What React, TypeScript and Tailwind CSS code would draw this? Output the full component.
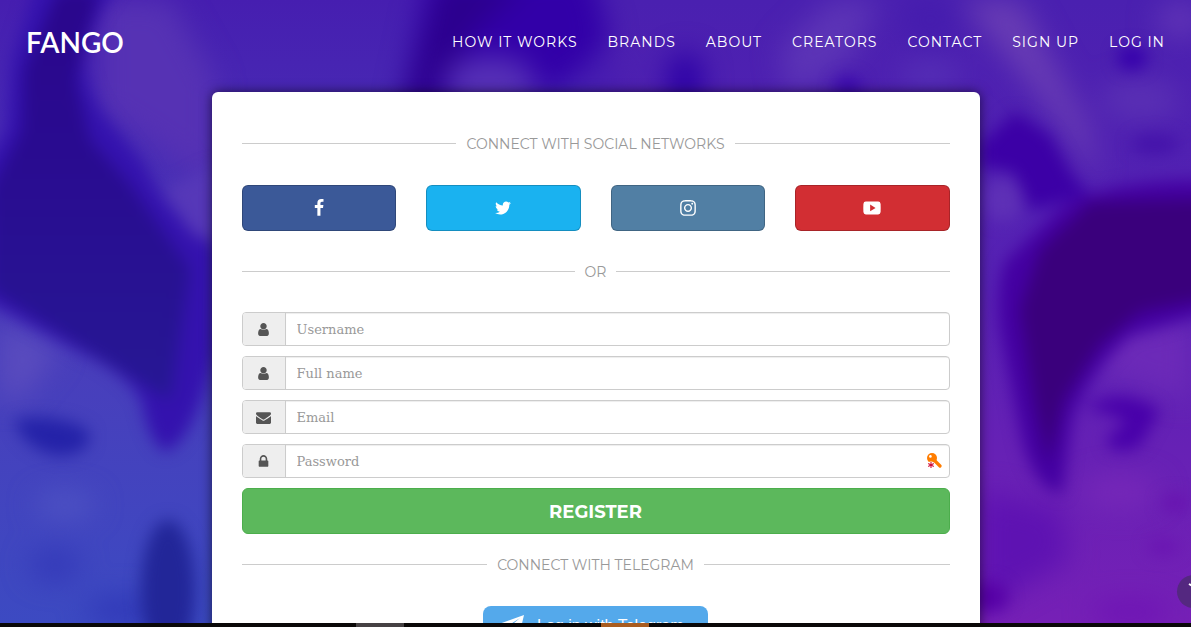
import type { ReactNode } from 'react'
import { FaInstagram } from 'react-icons/fa'

const NAV_LINKS = ['How it works', 'Brands', 'About', 'Creators', 'Contact', 'Sign up', 'Log in']

const ICONS = {
  user: 'M1536 1399q0 109-62.5 187t-150.5 78h-854q-88 0-150.5-78t-62.5-187q0-85 8.5-160.5t31.5-152 58.5-131 94-89 134.5-34.5q131 128 313 128t313-128q76 0 134.5 34.5t94 89 58.5 131 31.5 152 8.5 160.5zm-256-887q0 159-112.5 271.5t-271.5 112.5-271.5-112.5-112.5-271.5 112.5-271.5 271.5-112.5 271.5 112.5 112.5 271.5z',
  envelope:
    'M1792 710v794q0 66-47 113t-113 47h-1472q-66 0-113-47t-47-113v-794q44 49 101 87 362 246 497 345 57 42 92.5 65.5t94.5 48 110 24.5h2q51 0 110-24.5t94.5-48 92.5-65.5q170-123 498-345 57-39 100-87zm0-294q0 79-49 151t-122 123q-376 261-468 325-10 7-42.5 31t-54 38.5-52 32.5-57.5 27-50 9h-2q-23 0-50-9t-57.5-27-52-32.5-54-38.5-42.5-31q-91-64-262-182.5t-205-142.5q-62-42-117-115.5t-55-136.5q0-78 41.5-130t118.5-52h1472q65 0 112.5 47t47.5 113z',
  lock: 'M640 768h512v-192q0-106-75-181t-181-75-181 75-75 181v192zm832 96v576q0 40-28 68t-68 28h-960q-40 0-68-28t-28-68v-576q0-40 28-68t68-28h32v-192q0-184 132-316t316-132 316 132 132 316v192h32q40 0 68 28t28 68z',
  facebook:
    'M1343 12v264h-157q-86 0-116 36t-30 108v189h293l-39 296h-254v759h-306v-759h-255v-296h255v-218q0-186 104-288.5t277-102.5q147 0 228 12z',
  twitter:
    'M1684 408q-67 98-162 167 1 14 1 42 0 130-38 259.5t-115.5 248.5-184.5 210.5-258 146-323 54.5q-271 0-496-145 35 4 78 4 225 0 401-138-105-2-188-64.5t-114-159.5q33 5 61 5 43 0 85-11-112-23-185.5-111.5t-73.5-205.5v-4q68 38 146 41-66-44-105-115t-39-154q0-88 44-163 121 149 294.5 238.5t371.5 99.5q-8-38-8-74 0-134 94.5-228.5t228.5-94.5q140 0 236 102 109-21 205-78-37 115-142 178 93-10 186-50z',
  youtube:
    'M280 256h1232q220 0 240 240 20 400 0 800-20 240-240 240h-1232q-220 0-240-240-20-400 0-800 20-240 240-240zm431 290v680l540-340z',
}

function Icon({ name, className }: { name: keyof typeof ICONS; className: string }) {
  return (
    <svg viewBox="0 0 1792 1792" className={className} fill="currentColor" fillRule="evenodd" aria-hidden="true">
      <path d={ICONS[name]} />
    </svg>
  )
}

function Backdrop() {
  return (
    <svg
      className="absolute inset-0 h-full w-full"
      viewBox="0 0 1191 623"
      preserveAspectRatio="xMidYMid slice"
      aria-hidden="true"
    >
      <defs>
        <linearGradient id="left" x1="0" y1="0" x2="0" y2="1">
          <stop offset="0" stopColor="#461eb0" />
          <stop offset="0.5" stopColor="#4b3cba" />
          <stop offset="1" stopColor="#3c4ac2" />
        </linearGradient>
        <linearGradient id="right" x1="0" y1="0" x2="0" y2="1">
          <stop offset="0" stopColor="#4a20b0" />
          <stop offset="0.45" stopColor="#5722b4" />
          <stop offset="1" stopColor="#7620b6" />
        </linearGradient>
        <linearGradient id="hair" x1="0" y1="0" x2="0" y2="1">
          <stop offset="0" stopColor="#2a068c" />
          <stop offset="0.4" stopColor="#290b90" />
          <stop offset="1" stopColor="#261894" />
        </linearGradient>
        <filter id="soft" x="-30%" y="-30%" width="160%" height="160%" colorInterpolationFilters="sRGB">
          <feGaussianBlur stdDeviation="8" />
        </filter>
        <filter id="softer" x="-50%" y="-50%" width="200%" height="200%" colorInterpolationFilters="sRGB">
          <feGaussianBlur stdDeviation="14" />
        </filter>
      </defs>
      <rect width="600" height="623" fill="url(#left)" />
      <rect x="600" width="591" height="623" fill="url(#right)" />

      {/* left face */}
      <g filter="url(#softer)">
        <path d="M100 0 L170 0 L215 80 L215 190 L150 140 L100 110 Z" fill="#5632b4" />
        <path d="M0 320 L60 350 L20 400 L0 400 Z" fill="#5a4cbe" />
        <ellipse cx="65" cy="505" rx="30" ry="12" fill="#5054c4" />
        <ellipse cx="55" cy="565" rx="25" ry="15" fill="#3338b8" />
        <ellipse cx="125" cy="610" rx="40" ry="14" fill="#3038b8" />
      </g>
      <g filter="url(#soft)">
        <path
          d="M38 -20 L122 -20 Q88 20 84 65 Q92 105 115 128 L145 165 Q165 215 215 245 L215 350 Q195 440 165 452 Q148 440 142 402 Q130 375 80 352 L-20 298 L-20 170 L6 130 L12 60 Z"
          fill="#3412ae"
        />
        <path d="M58 -10 L100 -10 L76 80 L90 140 L130 185 L190 270 L170 400 L110 365 L-10 290 L-10 190 L22 130 L24 70 Z" fill="url(#hair)" />
        <path d="M165 190 L215 165 L215 245 L190 232 Z" fill="#5638b8" />
        <path d="M14 420 Q55 412 88 430 Q96 452 60 456 Q24 450 14 420 Z" fill="#2422a8" />
        <ellipse cx="168" cy="590" rx="27" ry="70" fill="#222698" />
      </g>

      {/* middle face */}
      <g filter="url(#softer)">
        <path d="M430 -30 L590 -30 L610 40 L560 90 L400 110 Z" fill="#3200a8" />
        <path d="M440 -20 L530 -20 L475 30 L430 110 L400 110 Z" fill="#2c008e" />
        <ellipse cx="490" cy="82" rx="46" ry="26" fill="#5630b6" />
        <ellipse cx="685" cy="80" rx="18" ry="28" fill="#2c00a6" />
        <ellipse cx="600" cy="80" rx="20" ry="20" fill="#471cb0" />
      </g>

      {/* right face */}
      <g filter="url(#softer)">
        <path d="M780 50 L830 0 L880 0 L850 60 L790 100 Z" fill="#5c34b6" />
        <ellipse cx="930" cy="20" rx="28" ry="24" fill="#451cae" />
        <ellipse cx="930" cy="75" rx="30" ry="14" fill="#5630b6" />
        <path d="M960 0 L1020 0 L1090 130 L1100 180 L1050 110 Z" fill="#683cb4" />
        <ellipse cx="1180" cy="20" rx="24" ry="18" fill="#6034b6" />
        <ellipse cx="1140" cy="100" rx="40" ry="20" fill="#5a30b4" />
        <path d="M1100 330 L1191 320 L1191 400 L1090 370 Z" fill="#6c2ab8" />
        <ellipse cx="1120" cy="492" rx="40" ry="16" fill="#7628b8" />
        <path d="M980 490 L1060 510 L1070 560 L980 610 Z" fill="#5e12b2" />
        <ellipse cx="1130" cy="612" rx="40" ry="10" fill="#6c10b4" />
      </g>
      <g filter="url(#soft)">
        <path d="M980 145 L1015 112 L1050 135 L1072 175 L1090 195 L1030 210 L1014 172 L980 166 Z" fill="#3c00a6" />
        <ellipse cx="848" cy="88" rx="14" ry="12" fill="#3a08ac" />
        <ellipse cx="1132" cy="58" rx="15" ry="12" fill="#3600ac" />
        <ellipse cx="1155" cy="144" rx="24" ry="10" fill="#4412aa" />
        <ellipse cx="1003" cy="200" rx="20" ry="22" fill="#5e30b6" />
        <path
          d="M1210 180 Q1100 180 1058 210 L1005 262 Q992 300 1004 350 L1022 440 Q1034 488 1062 494 L1072 420 Q1086 376 1130 335 L1210 312 Z"
          fill="#4400a2"
        />
        <path d="M1220 198 L1090 202 L1040 250 L1020 310 L1034 400 L1048 465 L1064 400 L1100 345 L1140 312 L1220 296 Z" fill="#3a007c" />
        <path d="M1085 408 Q1120 384 1160 410 L1140 446 Q1110 458 1106 438 L1128 422 Q1108 412 1085 408 Z" fill="#4800aa" />
        <ellipse cx="1175" cy="503" rx="14" ry="9" fill="#6812b0" />
        <ellipse cx="1163" cy="547" rx="16" ry="8" fill="#6a14b2" />
        <ellipse cx="990" cy="597" rx="18" ry="15" fill="#5600a6" />
      </g>
    </svg>
  )
}

function Divider({ children }: { children: ReactNode }) {
  return (
    <div className="flex items-center gap-[10px] text-sm leading-[19px] text-[#999999]">
      <span className="h-px flex-1 bg-[#cccccc]" />
      <h2 className="pt-0.5">{children}</h2>
      <span className="h-px flex-1 bg-[#cccccc]" />
    </div>
  )
}

function SocialButton({ label, className, children }: { label: string; className: string; children: ReactNode }) {
  return (
    <button
      type="button"
      aria-label={label}
      className={`flex h-[46px] items-center justify-center rounded-md border border-black/20 text-white ${className}`}
    >
      {children}
    </button>
  )
}

type FieldProps = { id: string; label: string; icon: keyof typeof ICONS; type?: string; children?: ReactNode }

function Field({ id, label, icon, type = 'text', children }: FieldProps) {
  return (
    <div className="relative flex h-[34px] overflow-hidden rounded border border-[#cccccc] bg-white">
      <label
        htmlFor={id}
        aria-label={label}
        className="flex w-[43px] items-center justify-center border-r border-[#cccccc] bg-[#eeeeee] text-[#555555]"
      >
        <Icon name={icon} className="size-[15px]" />
      </label>
      <input
        id={id}
        type={type}
        placeholder={label}
        className="min-w-0 flex-1 px-[11px] pt-0.5 font-['Roboto_Slab','DejaVu_Serif',serif] text-[13px] text-[#555555] shadow-[inset_0_1px_1px_rgba(0,0,0,0.075)] outline-none placeholder:text-[#999999]"
      />
      {children}
    </div>
  )
}

function KeyIcon() {
  return (
    <svg viewBox="0 0 16 16" className="absolute top-2 right-[7px] size-4" aria-hidden="true">
      <path d="M8 7 L14 13" stroke="#ff7d00" strokeWidth="3.2" strokeLinecap="round" />
      <circle cx="6" cy="5" r="5" fill="#ff7d00" />
      <circle cx="4.4" cy="3.4" r="1.3" fill="#fff" />
      <circle cx="5" cy="12" r="3.6" fill="#fff" />
      <path d="M5 9 V15 M2.2 10.6 L7.8 13.4 M2.2 13.4 L7.8 10.6" stroke="#d0103a" strokeWidth="1.1" />
    </svg>
  )
}

export default function App() {
  return (
    <div className="flex h-screen flex-col overflow-hidden font-['Montserrat','Inter',sans-serif]">
      <div className="relative min-h-0 flex-1 overflow-hidden bg-[#471eb0]">
        <Backdrop />

        <header className="relative flex h-[84px] items-center justify-between px-[26px] text-white">
          <a href="#" className="font-['Lato',sans-serif] text-[28px] leading-9 font-semibold">
            FANGO
          </a>
          <nav>
            <ul className="flex gap-[30px] text-sm tracking-[1px] uppercase">
              {NAV_LINKS.map((link) => (
                <li key={link}>
                  <a href="#">{link}</a>
                </li>
              ))}
            </ul>
          </nav>
        </header>

        <main className="relative mx-auto mt-2 max-w-3xl rounded-md bg-white px-[30px] pt-[41px] pb-[30px] shadow-[0_0_12px_rgba(0,0,0,0.6)]">
          <Divider>CONNECT WITH SOCIAL NETWORKS</Divider>

          <div className="mt-[31px] mb-[30px] grid grid-cols-4 gap-[30px]">
            <SocialButton label="Facebook" className="bg-[#3b5998]">
              <Icon name="facebook" className="size-[18px]" />
            </SocialButton>
            <SocialButton label="Twitter" className="bg-[#1ab2f0]">
              <Icon name="twitter" className="size-[18px]" />
            </SocialButton>
            <SocialButton label="Instagram" className="bg-[#517fa4]">
              <FaInstagram className="size-[18px]" />
            </SocialButton>
            <SocialButton label="YouTube" className="bg-[#d22e33]">
              <Icon name="youtube" className="size-[18px]" />
            </SocialButton>
          </div>

          <Divider>OR</Divider>

          <form className="mt-[30px] flex flex-col gap-[10px]">
            <Field id="username" label="Username" icon="user" />
            <Field id="fullname" label="Full name" icon="user" />
            <Field id="email" label="Email" icon="envelope" type="email" />
            <Field id="password" label="Password" icon="lock" type="password">
              <KeyIcon />
            </Field>
            <button
              type="submit"
              className="h-[46px] rounded-md border border-[#4cae4c] bg-[#5cb85c] pt-0.5 text-lg leading-6 font-bold text-white"
            >
              REGISTER
            </button>
          </form>

          <div className="mt-5 mb-[31px]">
            <Divider>CONNECT WITH TELEGRAM</Divider>
          </div>

          <button
            type="button"
            className="mx-auto flex h-10 w-[225px] items-center gap-3 rounded-lg bg-[#54a9eb] px-4 font-['Liberation_Sans',sans-serif] text-base text-white"
          >
            <svg viewBox="0 0 26 22" className="h-[22px] w-[26px]" fill="currentColor" aria-hidden="true">
              <path d="M25 0 L20 21 L13 16 L10 19 L9 13 L21 3 L7 12 L0 9 Z" />
            </svg>
            Log in with Telegram
          </button>
        </main>

        <button
          type="button"
          aria-label="Back to top"
          className="absolute right-[-19px] bottom-[15px] size-[33px] rounded-full bg-[#542880] text-white"
        >
          <svg viewBox="0 0 33 33" className="size-full" fill="none" stroke="currentColor" strokeWidth="2" aria-hidden="true">
            <path d="M12 9 L17 12 L22 9" />
          </svg>
        </button>
      </div>

      {/* bottom bar with its two open items */}
      <div className="grid h-1 shrink-0 grid-cols-[356px_48px_197px_48px_1fr] bg-[#0a0808]">
        <span className="col-start-2 bg-[#454143]" />
        <span className="col-start-4 bg-[#a85c20]" />
      </div>
    </div>
  )
}
